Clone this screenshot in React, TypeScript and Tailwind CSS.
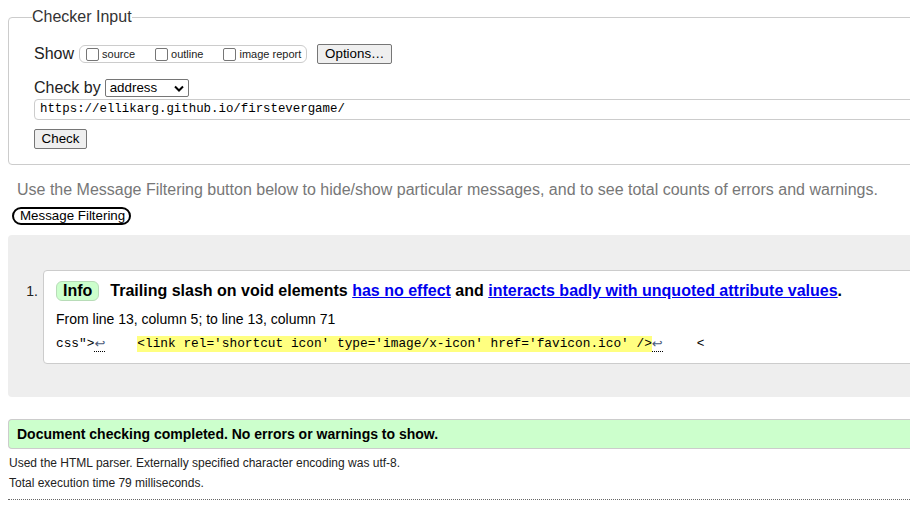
import React from 'react'

function Box({ label }: { label: string }) {
  return (
    <span className="flex items-center gap-[3px]">
      <span className="h-[13px] w-[13px] rounded-[2px] border border-[#767676] bg-white" />
      <span className="text-[11px] leading-[13px]">{label}</span>
    </span>
  )
}

function Btn({ children, className }: { children: React.ReactNode; className?: string }) {
  return (
    <span
      className={
        'flex h-[20px] items-center justify-center rounded-[2px] border border-[#767676] bg-[#efefef] text-[13.33px] text-black ' +
        (className ?? '')
      }
    >
      {children}
    </span>
  )
}

export default function App() {
  return (
    <div className="h-[527px] w-[910px] overflow-hidden bg-white font-['Liberation_Sans',Arial,sans-serif] text-[#222]">
      <div className="w-[1000px]">
        <fieldset className="mx-[8px] mt-[8px] rounded-[4px] border border-[#ccc] pb-[15px] pl-[25px] pt-[18px]">
          <legend className="-ml-[2px] text-[16px] leading-[18px] text-[#333]">Checker Input</legend>

          <div className="flex h-[20px] items-center">
            <span className="text-[16px] leading-[18px]">Show</span>
            <div className="ml-[5px] flex h-[18px] items-center gap-[20px] rounded-[6px] border border-[#ccc] pl-[6px] pr-[5px]">
              <Box label="source" />
              <Box label="outline" />
              <Box label="image report" />
            </div>
            <Btn className="ml-[10px] w-[75px]">Options…</Btn>
          </div>

          <div className="mt-[15px] flex h-[18px] items-center">
            <span className="text-[16px] leading-[18px]">Check by</span>
            <div className="ml-[4px] flex h-[18px] w-[84px] items-center justify-between rounded-[2px] border border-[#767676] pl-[4px] pr-[4px] text-[13.33px] text-black">
              <span>address</span>
              <svg width="10" height="7" viewBox="0 0 10 7">
                <path d="M1 1.5 L5 5.5 L9 1.5" fill="none" stroke="#000" strokeWidth="2" />
              </svg>
            </div>
          </div>

          <div className="mt-[2px] flex h-[21px] items-center rounded-[4px] border border-[#ccc] pl-[5px] font-['Liberation_Mono',monospace] text-[12.4px] text-black">
            https://ellikarg.github.io/firstevergame/
          </div>

          <Btn className="mt-[9px] w-[53px]">Check</Btn>
        </fieldset>

        <p className="ml-[17px] mt-[16px] text-[16px] leading-[18px] text-[#777]">
          Use the Message Filtering button below to hide/show particular messages, and to see total counts of errors and warnings.
        </p>

        <span className="ml-[12px] mt-[8px] flex h-[18px] w-[119px] items-center rounded-[9px] border-2 border-black pl-[6px] text-[13.33px] text-black">
          Message Filtering
        </span>

        <section className="ml-[8px] mt-[10px] flex rounded-l-[4px] bg-[#eee] pb-[33px] pt-[35px]">
          <span className="w-[35px] pr-[5px] pt-[13px] text-right text-[14px] leading-[16px] text-[#222]">1.</span>
          <article className="flex-1 rounded-[4px] border border-[#ccc] bg-white pb-[11px] pl-[12px] pt-[10px]">
            <header className="flex h-[20px] items-center text-[16px] font-bold text-black">
              <span className="flex h-[20px] items-center rounded-[6px] border border-[#b8dcb8] bg-[#ccffcc] px-[6px]">Info</span>
              <p className="ml-[11px]">
                Trailing slash on void elements{' '}
                <span className="text-[#0000ee] underline">has no effect</span> and{' '}
                <span className="text-[#0000ee] underline">interacts badly with unquoted attribute values</span>.
              </p>
            </header>
            <p className="mt-[10px] text-[14px] leading-[16px] text-black">From line 13, column 5; to line 13, column 71</p>
            <div className="mt-[9px] flex h-[16px] items-center whitespace-pre font-['Liberation_Mono',monospace] text-[12.8px] leading-[16px] text-black">
              <span>css"&gt;</span>
              <span className="border-b border-dotted border-black font-['DejaVu_Sans',sans-serif] text-[13px] leading-[14px] text-[#4a5a7a]">↩</span>
              <span className="ml-[32px] inline-block h-[16px] bg-[#ffff80]">
                &lt;link rel='shortcut icon' type='image/x-icon' href='favicon.ico' /&gt;
              </span>
              <span className="border-b border-dotted border-black font-['DejaVu_Sans',sans-serif] text-[13px] leading-[14px] text-[#4a5a7a]">↩</span>
              <span className="ml-[34px]">&lt;</span>
            </div>
          </article>
        </section>

        <div className="ml-[8px] mt-[22px] flex h-[30px] items-center rounded-l-[4px] border-y border-l border-[#ccc] bg-[#ccffcc] pl-[8px] text-[14px] font-bold text-black">
          Document checking completed. No errors or warnings to show.
        </div>

        <p className="ml-[9px] mt-[7px] text-[12px] leading-[14px] text-[#222]">
          Used the HTML parser. Externally specified character encoding was utf-8.
        </p>
        <p className="ml-[9px] mt-[6px] text-[12px] leading-[14px] text-[#222]">Total execution time 79 milliseconds.</p>
        <div className="mx-[8px] mt-[9px] border-t border-dotted border-[#666]" />
      </div>
    </div>
  )
}
